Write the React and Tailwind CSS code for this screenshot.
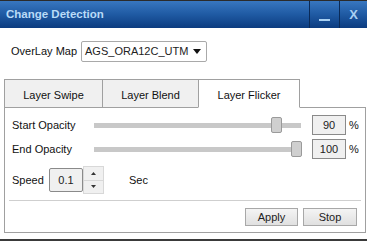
const font = { fontFamily: '"Liberation Sans", Arial, sans-serif' };

const Slider = ({ value }) => {
  const left = Math.round((207 - 10) * (value / 100));
  return (
    <div className="relative h-[16px] w-[207px] flex items-center">
      <div className="h-[5px] w-full bg-[#c8c8c8]" />
      <div
        className="absolute top-0 h-[16px] w-[11px] rounded-[2px] border border-[#9a9a9a] bg-[#cfcfcf]"
        style={{ left }}
      />
    </div>
  );
};

const OpacityRow = ({ label, value }) => (
  <div className="flex items-center h-[20px]">
    <span className="w-[82px] shrink-0 text-[#111]">{label}</span>
    <Slider value={value} />
    <div className="ml-[11px] h-[20px] w-[34px] border border-[#8a8a8a] bg-[#f0f0f0] flex items-center justify-center text-[#222]">
      {value}
    </div>
    <span className="ml-[3px] text-[#111]">%</span>
  </div>
);

export default function App() {
  return (
    <div className="w-[367px] h-[242px] bg-white text-[11px] overflow-hidden flex flex-col" style={font}>
      {/* title bar */}
      <div className="h-[28px] shrink-0 border-t border-[#2b2b2b] bg-gradient-to-b from-[#3877c0] via-[#1f5aa3] to-[#0c3c80] flex">
        <div className="flex-1 flex items-center pl-[6px] text-[11.5px] font-bold text-[#b9dbf7]">
          Change Detection
        </div>
        <div className="w-[30px] border-l border-[#0a2a57] flex items-end justify-center pb-[7px]">
          <div className="h-[2px] w-[11px] bg-[#a8d0f2]" />
        </div>
        <div className="w-[28px] border-l border-[#0a2a57] flex items-center justify-center text-[13px] font-bold text-[#a8d0f2]">
          X
        </div>
      </div>

      {/* overlay map */}
      <div className="flex items-center mt-[13px] pl-[11px]">
        <span className="text-[#111]">OverLay Map</span>
        <div className="ml-[4px] h-[21px] w-[126px] border border-[#a9a9a9] rounded-[2px] bg-white flex items-center pl-[3px] pr-[5px] text-[#222]">
          <span className="flex-1">AGS_ORA12C_UTM</span>
          <svg width="8" height="5" viewBox="0 0 8 5">
            <path d="M0 0h8L4 5z" fill="#111" />
          </svg>
        </div>
      </div>

      {/* tabs */}
      <div className="mt-[17px] ml-[4px] w-[362px] flex">
        <div className="h-[29px] w-[98px] border-t border-l border-b border-[#a0a0a0] bg-[#f0f0f0] flex items-center justify-center pt-[3px] text-[#111]">
          Layer Swipe
        </div>
        <div className="h-[29px] w-[96px] border-t border-l border-b border-[#a0a0a0] bg-[#f0f0f0] flex items-center justify-center pt-[3px] text-[#111]">
          Layer Blend
        </div>
        <div className="h-[29px] w-[102px] border-t border-l border-r border-[#a0a0a0] border-b border-b-white bg-white flex items-center justify-center pt-[3px] text-[#111]">
          Layer Flicker
        </div>
        <div className="flex-1 h-[29px] border-b border-[#a0a0a0]" />
      </div>

      {/* panel */}
      <div className="ml-[4px] w-[362px] h-[125px] border-l border-r border-b border-[#a0a0a0] flex flex-col pt-[7px] px-[4px]">
        <div className="pl-[3px] flex flex-col gap-[4px]">
          <OpacityRow label="Start Opacity" value={90} />
          <OpacityRow label="End Opacity" value={100} />
        </div>

        <div className="mt-[7px] h-[28px] pl-[3px] flex items-center">
          <span className="w-[37px] text-[#111]">Speed</span>
          <div className="h-[24px] w-[34px] border border-[#8a8a8a] rounded-[2px] bg-[#f0f0f0] flex items-center justify-center text-[#222]">
            0.1
          </div>
          <div className="w-[21px] h-[28px] flex flex-col">
            <div className="flex-1 border border-[#d8d8d8] bg-[#f0f0f0] flex items-center justify-center">
              <svg width="5" height="3" viewBox="0 0 5 3">
                <path d="M0 3h5L2.5 0z" fill="#333" />
              </svg>
            </div>
            <div className="flex-1 border border-t-0 border-[#d8d8d8] bg-[#f0f0f0] flex items-center justify-center">
              <svg width="5" height="3" viewBox="0 0 5 3">
                <path d="M0 0h5L2.5 3z" fill="#333" />
              </svg>
            </div>
          </div>
          <span className="ml-[25px] text-[#111]">Sec</span>
        </div>

        <div className="mt-[6px] h-px bg-[#cfcfcf]" />

        <div className="mt-[7px] flex justify-end gap-[5px] pr-[4px]">
          <button className="h-[18px] w-[53px] border border-[#a8a8a8] bg-gradient-to-b from-[#f4f4f4] to-[#e0e0e0] text-[#222]">
            Apply
          </button>
          <button className="h-[18px] w-[54px] border border-[#a8a8a8] bg-gradient-to-b from-[#f4f4f4] to-[#e0e0e0] text-[#222]">
            Stop
          </button>
        </div>
      </div>

      <div className="mt-[6px] h-[2px] bg-[#3a3a3a]" />
    </div>
  );
}
